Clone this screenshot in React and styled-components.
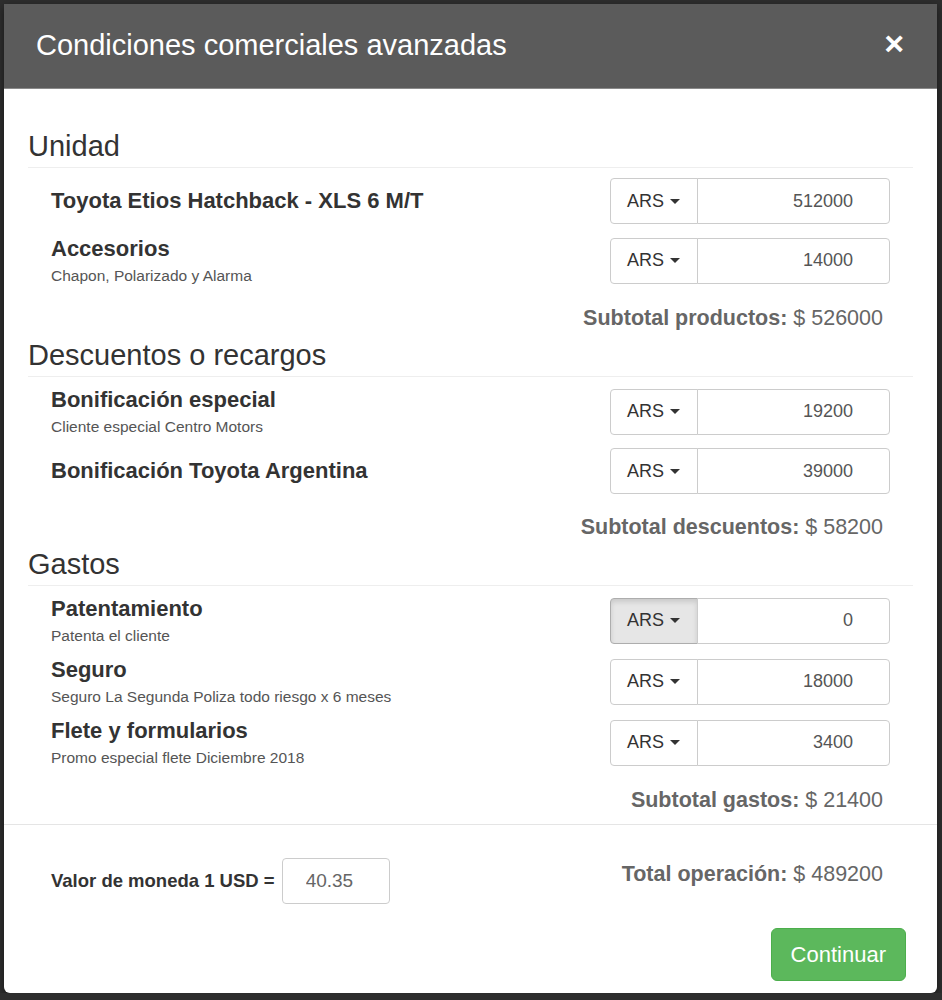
import React from "react";
import styled, { createGlobalStyle } from "styled-components";

const GlobalStyle = createGlobalStyle`
	html, body {
		margin: 0;
		padding: 0;
		background: #2e2e2e;
	}
	body {
		font-family: "Liberation Sans", Arial, Helvetica, sans-serif;
		color: #333;
	}
`;

const sections = [
	{
		title: "Unidad",
		subtotalLabel: "Subtotal productos:",
		subtotal: 526000,
		items: [
			{ name: "Toyota Etios Hatchback - XLS 6 M/T", value: "512000" },
			{ name: "Accesorios", note: "Chapon, Polarizado y Alarma", value: "14000" },
		],
	},
	{
		title: "Descuentos o recargos",
		subtotalLabel: "Subtotal descuentos:",
		subtotal: 58200,
		items: [
			{ name: "Bonificación especial", note: "Cliente especial Centro Motors", value: "19200" },
			{ name: "Bonificación Toyota Argentina", value: "39000" },
		],
	},
	{
		title: "Gastos",
		subtotalLabel: "Subtotal gastos:",
		subtotal: 21400,
		items: [
			{ name: "Patentamiento", note: "Patenta el cliente", value: "0", active: true },
			{ name: "Seguro", note: "Seguro La Segunda Poliza todo riesgo x 6 meses", value: "18000" },
			{ name: "Flete y formularios", note: "Promo especial flete Diciembre 2018", value: "3400" },
		],
	},
];

const App = () => {
	return (
		<>
			<GlobalStyle />
			<Modal>
				<Header>
					<Title>Condiciones comerciales avanzadas</Title>
					<Close>×</Close>
				</Header>
				<Body>
					{sections.map((section) => (
						<Section key={section.title}>
							<SectionTitle>{section.title}</SectionTitle>
							<Rows>
								{section.items.map((item) => (
									<Row key={item.name}>
										<LabelBox>
											<ItemName>{item.name}</ItemName>
											{item.note && <ItemNote>{item.note}</ItemNote>}
										</LabelBox>
										<InputGroup>
											<Addon $active={item.active}>
												ARS <Caret />
											</Addon>
											<Amount defaultValue={item.value} />
										</InputGroup>
									</Row>
								))}
							</Rows>
							<Subtotal>
								<strong>{section.subtotalLabel}</strong> $ {section.subtotal}
							</Subtotal>
						</Section>
					))}
				</Body>
				<Footer>
					<FooterRow>
						<Rate>
							<RateLabel>Valor de moneda 1 USD =</RateLabel>
							<RateInput defaultValue="40.35" />
						</Rate>
						<Total>
							<strong>Total operación:</strong> $ 489200
						</Total>
					</FooterRow>
					<Actions>
						<Button>Continuar</Button>
					</Actions>
				</Footer>
			</Modal>
		</>
	);
};

export default App;

const Modal = styled.div`
	width: 933px;
	margin: 4px 0 0 4px;
	background: #fff;
	border-radius: 0 0 6px 6px;
	box-shadow: 0 3px 9px rgba(0, 0, 0, 0.5);
	overflow: hidden;
`;
const Header = styled.div`
	height: 85px;
	background: #5b5b5b;
	display: flex;
	align-items: center;
	justify-content: space-between;
	padding: 0 33px 0 32px;
	box-sizing: border-box;
	border-bottom: 1px solid #8a8a8a;
`;
const Title = styled.h4`
	margin: 0;
	font-size: 29px;
	font-weight: normal;
	color: #fff;
	line-height: 32px;
	padding-bottom: 2px;
`;
const Close = styled.span`
	font-size: 34px;
	font-weight: bold;
	color: #fff;
	line-height: 1;
	padding-bottom: 6px;
`;
const Body = styled.div`
	padding: 41px 24px 11px;
`;
const Section = styled.section`
	& + & {
		margin-top: 8px;
	}
`;
const SectionTitle = styled.h3`
	margin: 0;
	font-size: 29px;
	font-weight: normal;
	line-height: 32px;
	color: #333;
	padding: 0 0 5px;
	border-bottom: 1px solid #eee;
`;
const Rows = styled.div`
	display: flex;
	flex-direction: column;
	gap: 12px;
	margin-top: 10px;
	padding: 0 23px;
`;
const Row = styled.div`
	display: flex;
	align-items: center;
	justify-content: space-between;
	min-height: 46px;
`;
const LabelBox = styled.div`
	display: flex;
	flex-direction: column;
`;
const ItemName = styled.div`
	font-size: 22px;
	font-weight: bold;
	line-height: 26px;
	color: #333;
`;
const ItemNote = styled.div`
	font-size: 15.5px;
	line-height: 19px;
	margin-top: 4px;
	color: #555;
`;
const InputGroup = styled.div`
	display: flex;
	width: 280px;
	height: 46px;
`;
const Addon = styled.button`
	width: 88px;
	flex: none;
	display: flex;
	align-items: center;
	gap: 6px;
	padding: 0 0 0 16px;
	font-family: inherit;
	font-size: 18px;
	color: #333;
	background: ${(p) => (p.$active ? "#e6e6e6" : "#fff")};
	border: 1px solid ${(p) => (p.$active ? "#adadad" : "#ccc")};
	box-shadow: ${(p) => (p.$active ? "inset 0 3px 5px rgba(0, 0, 0, 0.125)" : "none")};
	border-radius: 4px 0 0 4px;
`;
const Caret = styled.span`
	width: 0;
	height: 0;
	border-left: 5px solid transparent;
	border-right: 5px solid transparent;
	border-top: 5px solid #333;
`;
const Amount = styled.input`
	flex: 1;
	min-width: 0;
	box-sizing: border-box;
	margin-left: -1px;
	padding: 0 36px 0 12px;
	font-family: inherit;
	font-size: 18px;
	color: #555;
	text-align: right;
	border: 1px solid #ccc;
	border-radius: 0 4px 4px 0;
	outline: none;
`;
const Subtotal = styled.div`
	margin-top: 20px;
	padding-right: 30px;
	text-align: right;
	font-size: 21.5px;
	line-height: 26px;
	color: #666;
`;
const Footer = styled.div`
	border-top: 1px solid #e5e5e5;
	padding: 33px 31px 12px 47px;
`;
const FooterRow = styled.div`
	display: flex;
	align-items: flex-start;
	justify-content: space-between;
`;
const Rate = styled.div`
	display: flex;
	align-items: center;
	gap: 7px;
`;
const RateLabel = styled.span`
	font-size: 18.5px;
	font-weight: bold;
	color: #333;
`;
const RateInput = styled.input`
	width: 108px;
	height: 46px;
	box-sizing: border-box;
	padding: 0 0 0 23px;
	font-family: inherit;
	font-size: 19px;
	color: #666;
	border: 1px solid #ccc;
	border-radius: 4px;
	outline: none;
`;
const Total = styled.div`
	padding: 3px 23px 0 0;
	font-size: 21.5px;
	line-height: 26px;
	color: #666;
`;
const Actions = styled.div`
	display: flex;
	justify-content: flex-end;
	margin-top: 24px;
`;
const Button = styled.button`
	height: 53px;
	padding: 0 19px;
	font-family: inherit;
	font-size: 22px;
	color: #fff;
	background: #5cb85c;
	border: 1px solid #4cae4c;
	border-radius: 6px;
`;
